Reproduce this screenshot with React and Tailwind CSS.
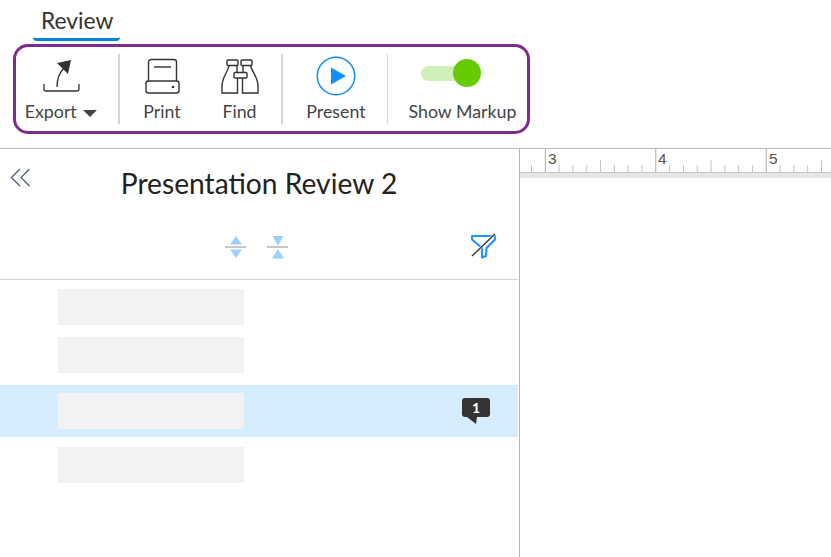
const lato = { fontFamily: 'Lato, sans-serif' }

function ExportIcon() {
  return (
    <svg width="38" height="36" viewBox="0 0 38 36" fill="none">
      <path d="M2 26v5c0 1.500.7 2 2 2h31c1.300 0 2-.5 2-2v-5" stroke="#333" strokeWidth="1.300" />
      <path d="M15 29c0-8 2-14 7-19" stroke="#333" strokeWidth="1.400" />
      <path d="M15 5 29 2 26 16z" fill="#333" />
    </svg>
  )
}

function PrintIcon() {
  return (
    <svg width="38" height="36" viewBox="0 0 38 36" fill="none" stroke="#333" strokeWidth="1.400">
      <path d="M5.500 23V4c0-1.500 1-2.500 2.500-2.500h23c1.500 0 2.500 1 2.500 2.500v19" />
      <path d="M11 9h17" />
      <rect x="3" y="23" width="33" height="12" rx="2.500" />
      <circle cx="30" cy="29" r="1.300" fill="#333" stroke="none" />
    </svg>
  )
}

function FindIcon() {
  return (
    <svg width="38" height="36" viewBox="0 0 38 36" fill="none" stroke="#333" strokeWidth="1.400">
      <rect x="6" y="2" width="11" height="5.500" rx="1" />
      <rect x="20" y="2" width="11" height="5.500" rx="1" />
      <rect x="13" y="14.500" width="13" height="5.500" rx="1" />
      <path d="M8 7.500C7 14 1 19 1 28v7h15.500V20M16 7.500v7M22 7.500v7M21.500 20v15H37v-7C37 19 31 14 29.500 7.500" />
    </svg>
  )
}

function PresentIcon() {
  return (
    <svg width="40" height="40" viewBox="0 0 40 40" fill="none">
      <circle cx="20" cy="20" r="18.700" stroke="#0f8fff" strokeWidth="1.500" />
      <path d="M15 11.500 30 20 15 28.500z" fill="#0f8fff" />
    </svg>
  )
}

function ExpandIcon() {
  return (
    <svg width="22" height="24" viewBox="0 0 22 24">
      <path d="M11 1l6 8.500H5z" fill="#9fd0fb" />
      <path d="M11 23l-6-8.500h12z" fill="#9fd0fb" />
      <path d="M0 12h21" stroke="#a9a9a9" strokeWidth="1.300" />
    </svg>
  )
}

function CollapseIcon() {
  return (
    <svg width="22" height="24" viewBox="0 0 22 24">
      <path d="M11 10.500 5.500 1h11z" fill="#9fd0fb" />
      <path d="M11 14l6 9.500H5z" fill="#9fd0fb" />
      <path d="M0 12h21" stroke="#a9a9a9" strokeWidth="1.300" />
    </svg>
  )
}

function FilterOffIcon() {
  return (
    <svg width="26" height="26" viewBox="0 0 26 26" fill="none">
      <path d="M1 3h23v3.500l-8.500 8.500-.5 8-4 1.500V15L1 6.500z" stroke="#1f96ff" strokeWidth="2.200" strokeLinejoin="round" />
      <path d="M1 23 24 1" stroke="#fff" strokeWidth="2.500" />
      <path d="M1 23 24 1" stroke="#333" strokeWidth="1.400" />
    </svg>
  )
}

function Ruler() {
  const ticks = []
  for (let i = 0; i < 23; i++) {
    const x = 11.5 + i * 13.81
    const mod = (i + 79) % 8
    const h = mod === 0 ? 23 : mod === 4 ? 12 : 7
    ticks.push(<path key={i} d={`M${x} 23V${23 - h}`} stroke={mod === 0 ? '#aaa' : '#c4c4c4'} strokeWidth="1" />)
  }
  return (
    <svg width="311" height="23" viewBox="0 0 311 23" className="block">
      {ticks}
      <text x="28" y="15" fontSize="15.500" fill="#5c5248" style={{ fontFamily: 'Liberation Sans, sans-serif' }}>3</text>
      <text x="138" y="15" fontSize="15.500" fill="#5c5248" style={{ fontFamily: 'Liberation Sans, sans-serif' }}>4</text>
      <text x="249" y="15" fontSize="15.500" fill="#5c5248" style={{ fontFamily: 'Liberation Sans, sans-serif' }}>5</text>
    </svg>
  )
}

function Tool({ label, icon, className }) {
  return (
    <div className={`flex flex-col items-center ${className}`}>
      <div className="flex h-[41px] items-center justify-center">{icon}</div>
      <div className="mb-px mt-[4px] whitespace-nowrap text-[17.800px] leading-[22px] text-[#444]">{label}</div>
    </div>
  )
}

export default function App() {
  return (
    <div className="h-[557px] w-[831px] overflow-hidden bg-white" style={lato}>
      <div className="h-[148px] pl-[13px]">
        <div className="ml-[20px] h-[41px] w-[87px] rounded-b-sm border-b-[3px] border-[#0085e0] pl-[8px] pt-[5px] text-[22.800px] leading-[30px] text-[#333]">
          Review
        </div>
        <div className="mt-[3px] flex h-[90px] w-[517px] items-center rounded-[15px] border-[3px] border-[#7b2d8e] pl-[2px]">
          <Tool
            label={<span>Export <span className="ml-[2px] inline-block translate-y-[-1px] border-x-[7px] border-t-[7px] border-x-transparent border-t-[#444]" /></span>}
            icon={<ExportIcon />}
            className="w-[86px]"
          />
          <div className="ml-[14px] h-[70px] w-[2px] bg-[#d4d4d4]" />
          <Tool label="Print" icon={<PrintIcon />} className="w-[84px]" />
          <Tool label="Find" icon={<FindIcon />} className="w-[71px]" />
          <div className="ml-[6px] h-[70px] w-[2px] bg-[#d4d4d4]" />
          <Tool label="Present" icon={<PresentIcon />} className="w-[104px] pl-[2px]" />
          <div className="h-[70px] w-px bg-[#d4d4d4]" />
          <Tool
            label="Show Markup"
            className="ml-[21px] w-[107px]"
            icon={
              <div className="relative mb-[5px] mr-[28px] h-[15px] w-[56px] rounded-full bg-[#cff0b8]">
                <div className="absolute right-[-4px] top-[-7px] h-[28px] w-[28px] rounded-full bg-[#66cc00]" />
              </div>
            }
          />
        </div>
      </div>
      <div className="flex h-[409px] border-t border-[#b8b8b8]">
        <div className="w-[520px] shrink-0 border-r border-[#b5b5b5] pr-px">
          <div className="relative h-[131px] border-b border-[#d4d4d4]">
            <svg width="22" height="20" viewBox="0 0 22 20" fill="none" stroke="#5b6b7c" strokeWidth="1.500" className="absolute left-[10px] top-[19px]">
              <path d="M10 1 1.500 9.500 10 18M19.500 1 11 9.500 19.500 18" />
            </svg>
            <div className="pt-[16px] text-center text-[28.200px] leading-[36px] text-[#222]">Presentation Review 2</div>
            <div className="mt-[32px] flex items-center pl-[225px]">
              <ExpandIcon />
              <div className="ml-[20px]"><CollapseIcon /></div>
              <div className="mb-px ml-[182px]"><FilterOffIcon /></div>
            </div>
          </div>
          <div className="pt-[9px]">
            <div className="h-[36px] pl-[58px]"><div className="h-full w-[186px] bg-[#f2f2f2]" /></div>
            <div className="mt-[12px] h-[36px] pl-[58px]"><div className="h-full w-[186px] bg-[#f2f2f2]" /></div>
            <div className="mt-[12px] flex h-[52px] items-center justify-between bg-[#d6ecff] pl-[58px] pr-[28px]">
              <div className="h-[36px] w-[186px] bg-[#f2f2f2]" />
              <div className="relative mb-[7px] h-[19px] w-[28px] rounded-[3px] bg-[#333] text-center text-[14px] font-bold leading-[19px] text-white">
                1
                <svg width="10" height="7" viewBox="0 0 10 7" className="absolute left-[5px] top-[19px]">
                  <path d="M0 0h10L9 7z" fill="#333" />
                </svg>
              </div>
            </div>
            <div className="mt-[10px] h-[36px] pl-[58px]"><div className="h-full w-[186px] bg-[#f2f2f2]" /></div>
          </div>
        </div>
        <div className="grow">
          <Ruler />
          <div className="h-[6px] border-t border-[#c9c9c9] bg-[#e6e6e6]" />
        </div>
      </div>
    </div>
  )
}
